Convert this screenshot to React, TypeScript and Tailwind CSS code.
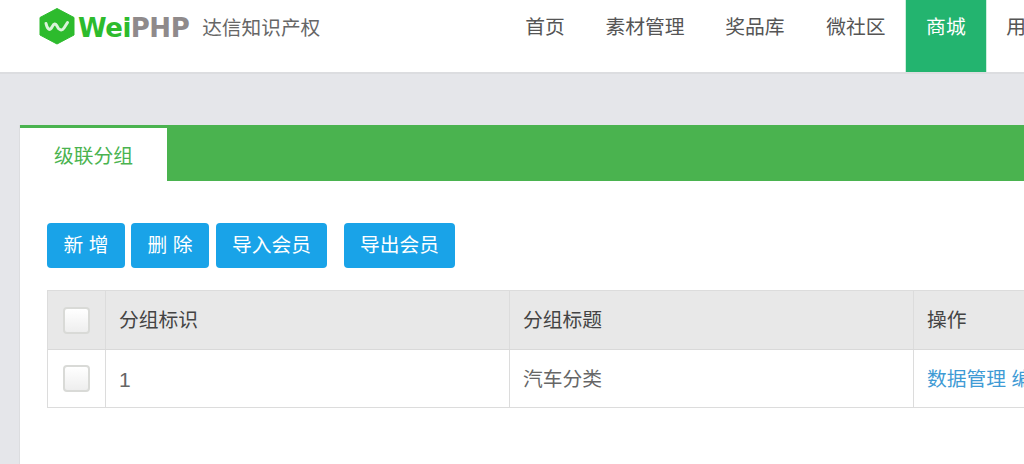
const cjk = "font-['Liberation_Sans','Noto_Sans_CJK_SC',sans-serif]";

function Logo() {
  return (
    <svg width="38" height="37" viewBox="0 0 38 37" className="shrink-0">
      <polygon points="19,0.5 36,9.5 36,27 19,36 2,27 2,9.5" fill="#2dbb2d" stroke="#2dbb2d" strokeLinejoin="round" />
      <path d="M8 15.5 C9.5 22 12 23 14 19 C16 15.5 17.5 15 19 18 C21 22.5 24 23 26 20 L29.5 14.5" fill="none" stroke="#d9f3d9" strokeWidth="3" strokeLinecap="round" />
    </svg>
  );
}

function NavItem({ label, active, className = "" }: { label: string; active?: boolean; className?: string }) {
  return (
    <div className={`h-[72px] shrink-0 px-[20.3px] pt-[15px] text-[19.8px] leading-[24px] ${active ? "bg-[#23b46f] text-white shadow-[0_0_0_1px_#cdeedd]" : "text-[#555555]"} ${className}`}>
      {label}
    </div>
  );
}

function Button({ label, className }: { label: string; className: string }) {
  return (
    <div className={`h-[45px] rounded-[4px] bg-[#19a3e8] text-white text-[19.8px] leading-[45px] text-center shrink-0 ${className}`}>
      {label}
    </div>
  );
}

function Check() {
  return (
    <div className="h-[27px] w-[27px] rounded-[4px] border-2 border-[#d9dad7] bg-gradient-to-b from-white to-[#eeeeee]" />
  );
}

export default function App() {
  return (
    <div className={`h-[464px] w-[1024px] overflow-hidden bg-[#e5e6ea] ${cjk}`}>
      <header className="flex h-[74px] overflow-hidden border-b-2 border-[#dcdde0] bg-white">
        <div className="flex w-[505px] shrink-0 items-start pl-[38px] pt-[8px]">
          <Logo />
          <span className="ml-[2px] mt-[5px] text-[26px] leading-[30px] font-bold tracking-[-0.5px] font-['DejaVu_Sans',sans-serif]">
            <span className="text-[#2dbb2d]">Wei</span>
            <span className="text-[#8f8a8b]">PHP</span>
          </span>
          <span className="ml-[13px] mt-[7px] text-[19.7px] leading-[26px] text-[#666666]">达信知识产权</span>
        </div>
        <div className="flex">
          <NavItem label="首页" />
          <NavItem label="素材管理" />
          <NavItem label="奖品库" />
          <NavItem label="微社区" className="ml-px" />
          <NavItem label="商城" active />
          <NavItem label="用户" />
        </div>
      </header>
      <main className="ml-[19px] mt-[51px] h-[400px] w-[1100px] border-l border-[#dcdde0] bg-white">
        <div className="flex h-[56px] border-t-[3px] border-[#4ab34f] bg-[#4ab34f]">
          <div className="h-[53px] w-[147px] bg-white pl-[34px] pt-[15px] text-[19.8px] leading-[26px] text-[#4ab34f]">级联分组</div>
        </div>
        <div className="ml-[27px] mt-[42px] flex">
          <Button label="新 增" className="w-[78px]" />
          <Button label="删 除" className="ml-[6px] w-[78px]" />
          <Button label="导入会员" className="ml-[7px] w-[111px]" />
          <Button label="导出会员" className="ml-[17px] w-[111px]" />
        </div>
        <div className="ml-[27px] mt-[22px] w-[1060px] border border-[#dcdcdc] text-[19.8px]">
          <div className="flex h-[59px] border-b border-[#d9d9d9] bg-[#e8e8e8] text-[#444444]">
            <div className="flex w-[58px] shrink-0 items-center justify-center border-r border-[#dcdcdc]"><Check /></div>
            <div className="flex w-[404px] shrink-0 items-center border-r border-[#dcdcdc] pl-[13px] pt-[2px]">分组标识</div>
            <div className="flex w-[404px] shrink-0 items-center border-r border-[#dcdcdc] pl-[13px] pt-[2px]">分组标题</div>
            <div className="flex flex-1 items-center pl-[13px] pt-[2px]">操作</div>
          </div>
          <div className="flex h-[57px] text-[#666666]">
            <div className="flex w-[58px] shrink-0 items-center justify-center border-r border-[#dcdcdc]"><Check /></div>
            <div className="flex w-[404px] shrink-0 items-center border-r border-[#dcdcdc] pl-[13px] pt-[2px] text-[21px]">1</div>
            <div className="flex w-[404px] shrink-0 items-center border-r border-[#dcdcdc] pl-[13px] pt-[2px]">汽车分类</div>
            <div className="flex flex-1 items-center pl-[13px] pt-[2px] text-[#3f9bd5]">数据管理 编辑</div>
          </div>
        </div>
      </main>
    </div>
  );
}
